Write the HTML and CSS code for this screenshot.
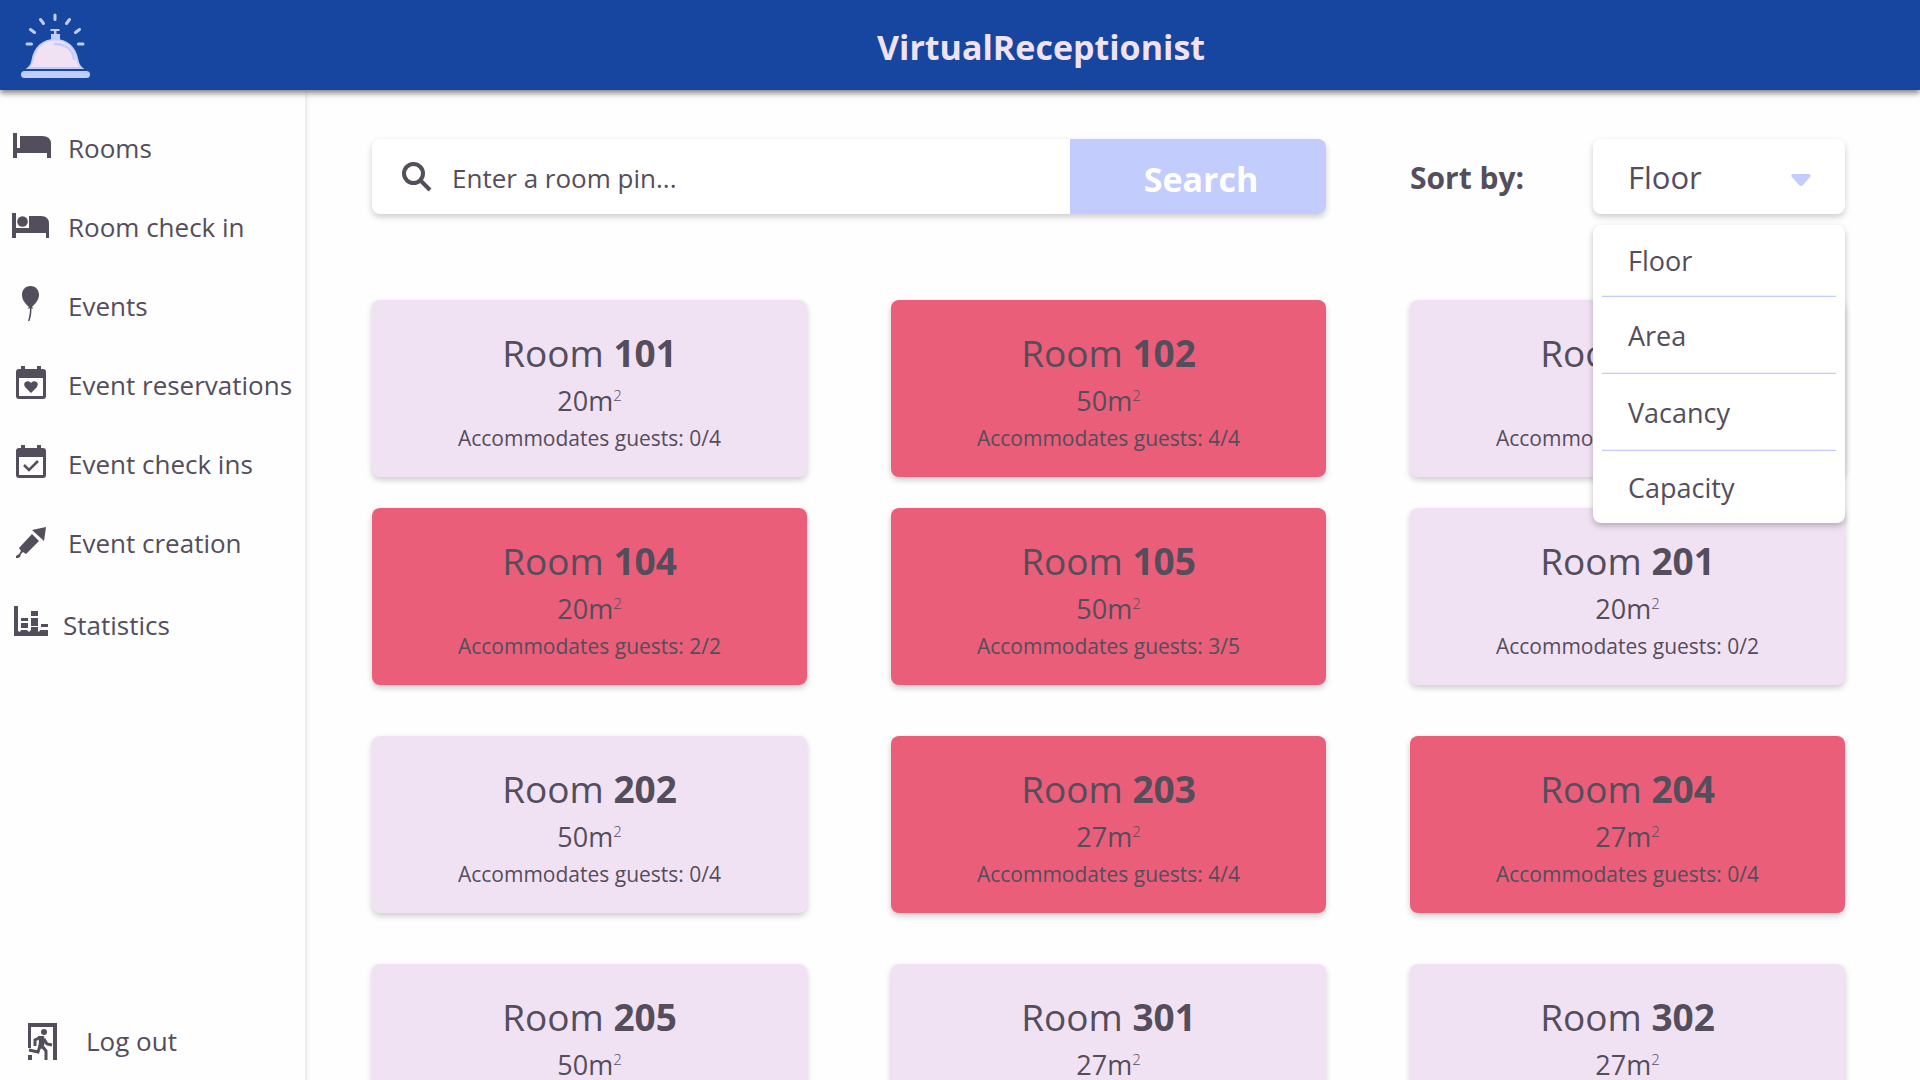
FILE: index.html
```html
<!DOCTYPE html>
<html lang="en">
<head>
<meta charset="utf-8">
<title>VirtualReceptionist</title>
<link rel="stylesheet" href="styles.css">
</head>
<body>
<header class="topbar">
  <svg class="logo" viewBox="0 0 70 66" aria-hidden="true">
    <g stroke="#c2cdfe" stroke-width="3" stroke-linecap="round">
      <path d="M35 3v4.500M20.500 7.500l3 4M49.500 7.500l-3 4M10.500 17.500l4 3M59.500 17.500l-4 3M7 32h4.500M58.500 32h4.500"/>
    </g>
    <path d="M30.500 17h9v2h-3v3H40v7h-9v-7h3v-3h-3.500z" fill="#c2cdfe"/>
    <path d="M5.500 57c3-2 5-4 6-9C14 34 23 27 35 27s21 7 23.500 21c1 5 3 7 6 9z" fill="#c2cdfe"/>
    <path d="M10 55c2-2 3-4 3.500-7C16 35.500 24 28.500 35 28.500S54 35.500 56.500 48c.5 3 1.500 5 3.500 7z" fill="#f1e2f3"/>
    <path d="M35 32c11 0 18 6 19 15" fill="none" stroke="#c2cdfe" stroke-width="2.500" stroke-linecap="round"/>
    <rect x="1" y="59" width="69" height="7" rx="3.500" fill="#c2cdfe"/>
  </svg>
  <h1 class="brand">VirtualReceptionist</h1>
</header>
<div class="layout">
  <nav class="sidebar">
    <ul class="menu">
      <li><a href="#rooms"><svg class="icon" viewBox="0 0 40 40" aria-hidden="true"><path d="M1 5h4v15h3V8h22q9 0 9 8v14h-4v-5H5v5H1z"/></svg>Rooms</a></li>
      <li><a href="#checkin"><svg class="icon" viewBox="0 0 40 40" aria-hidden="true"><path d="M0 6h4v15h13V9h12q8 0 8 8v14h-3v-5H4v5H0z"/><circle cx="10.500" cy="14.500" r="5.300"/></svg>Room check in</a></li>
      <li><a href="#events"><svg class="icon" viewBox="0 0 40 40" aria-hidden="true"><path d="M18.500 0C13 0 10 4 10 9c0 6 5 10 7 12l-1.500 1.500h2.500c0 5-1 9-2 12.500h1.500c1.500-4 2-8 2-12.500h2L20 21c3-3 7-7 7-12 0-5-3-9-8.500-9z"/></svg>Events</a></li>
      <li><a href="#reservations"><svg class="icon" viewBox="0 0 40 40" aria-hidden="true"><path fill-rule="evenodd" d="M9 1h4v3h12V1h4v3h2q3 0 3 3v24q0 3-3 3H7q-3 0-3-3V7q0-3 3-3h2zM7 13v18h24V13z"/><path d="M19 28l-5.500-5.500c-4-5 2.500-8.500 5.500-4.500 3-4 9.500-.5 5.500 4.500z"/></svg>Event reservations</a></li>
      <li><a href="#checkins"><svg class="icon" viewBox="0 0 40 40" aria-hidden="true"><path fill-rule="evenodd" d="M9 1h4v3h12V1h4v3h2q3 0 3 3v24q0 3-3 3H7q-3 0-3-3V7q0-3 3-3h2zM7 13v18h24V13z"/><path d="M12 21l5 5 9-9" fill="none" stroke="#544d5b" stroke-width="2.500"/></svg>Event check ins</a></li>
      <li><a href="#creation"><svg class="icon" viewBox="0 0 40 40" aria-hidden="true"><path d="M20 7l14-3-2 14zM20 11l7 7-13 13-3-2-2 2-1 3-2 1H4v-2l3-2 2-3-2-3z"/></svg>Event creation</a></li>
      <li><a class="stats" href="#statistics"><svg class="icon" viewBox="0 0 40 40" aria-hidden="true"><path d="M2 1h4v25l2 1 1-2h6l2 2 2-2h6l2 2 1-2h8v6H2zM9 13h7v3H9zM9 18h7v5H9zM19 6h7v5h-7zM19 13h7v8h-7zM19 22h7v5h-7zM29 19h7v3h-7z"/></svg>Statistics</a></li>
    </ul>
    <a class="logout" href="#logout"><svg class="icon" viewBox="0 0 40 40" aria-hidden="true"><path d="M4 2h29v37h-4V6H7v21H4zM4 34h4v5H4z"/><circle cx="20" cy="11" r="3"/><path d="M15 17l-4 2v6M16 25l-2 6-9-2M19 26l3 4v9M20 18l3 5 5 1" fill="none" stroke="#544d5b" stroke-width="3"/><path d="M14 15h6l1 6-2 7-5-1 1-6z"/></svg>Log out</a>
  </nav>
  <main class="content">
    <div class="tools">
      <form class="search">
        <svg class="glass" viewBox="0 0 30 30" aria-hidden="true"><circle cx="11.500" cy="11.500" r="9.500"/><path d="M18 18l10 10"/></svg>
        <input class="pin" type="text" aria-label="Room pin" placeholder="Enter a room pin...">
        <button class="go" type="button">Search</button>
      </form>
      <div class="sort">
        <span class="sort-label" id="sort-label">Sort by:</span>
        <div class="dropdown">
          <button class="current" type="button" aria-labelledby="sort-label" aria-expanded="true">Floor<svg class="caret" viewBox="0 0 20 12" aria-hidden="true"><path d="M2 0h16q3 1 1 3l-7 8q-2 2-4 0L1 3q-2-2 1-3z"/></svg></button>
          <ul class="options">
            <li><button type="button">Floor</button></li>
            <li><button type="button">Area</button></li>
            <li><button type="button">Vacancy</button></li>
            <li><button type="button">Capacity</button></li>
          </ul>
        </div>
      </div>
    </div>
    <div class="floors">
      <section class="rooms paired">
        <article class="card"><h2>Room <b>101</b></h2><p class="area">20m<sup>2</sup></p><p class="guests">Accommodates guests: 0/4</p></article>
        <article class="card taken"><h2>Room <b>102</b></h2><p class="area">50m<sup>2</sup></p><p class="guests">Accommodates guests: 4/4</p></article>
        <article class="card"><h2>Room <b>103</b></h2><p class="area">20m<sup>2</sup></p><p class="guests">Accommodates guests: 0/4</p></article>
        <article class="card taken"><h2>Room <b>104</b></h2><p class="area">20m<sup>2</sup></p><p class="guests">Accommodates guests: 2/2</p></article>
        <article class="card taken"><h2>Room <b>105</b></h2><p class="area">50m<sup>2</sup></p><p class="guests">Accommodates guests: 3/5</p></article>
        <article class="card"><h2>Room <b>201</b></h2><p class="area">20m<sup>2</sup></p><p class="guests">Accommodates guests: 0/2</p></article>
      </section>
      <section class="rooms">
        <article class="card"><h2>Room <b>202</b></h2><p class="area">50m<sup>2</sup></p><p class="guests">Accommodates guests: 0/4</p></article>
        <article class="card taken"><h2>Room <b>203</b></h2><p class="area">27m<sup>2</sup></p><p class="guests">Accommodates guests: 4/4</p></article>
        <article class="card taken"><h2>Room <b>204</b></h2><p class="area">27m<sup>2</sup></p><p class="guests">Accommodates guests: 0/4</p></article>
        <article class="card"><h2>Room <b>205</b></h2><p class="area">50m<sup>2</sup></p><p class="guests">Accommodates guests: 0/4</p></article>
        <article class="card"><h2>Room <b>301</b></h2><p class="area">27m<sup>2</sup></p><p class="guests">Accommodates guests: 0/4</p></article>
        <article class="card"><h2>Room <b>302</b></h2><p class="area">27m<sup>2</sup></p><p class="guests">Accommodates guests: 0/4</p></article>
      </section>
    </div>
  </main>
</div>
</body>
</html>
```
FILE: styles.css
```css
* { box-sizing: border-box; }
body {
  margin: 0;
  height: 100vh;
  display: flex;
  flex-direction: column;
  overflow: hidden;
  background: #fefefe;
  color: #544d5b;
  font-family: "Segoe UI", "Open Sans", "Noto Sans", sans-serif;
  font-size: 26px;
}
ul, h1, h2, p { margin: 0; padding: 0; }
ul { list-style: none; }
button, input { font: inherit; color: inherit; border: 0; background: none; }
a { color: inherit; text-decoration: none; }

.topbar {
  flex: none;
  display: flex;
  align-items: center;
  height: 90px;
  padding: 0 20px;
  background: #16469f;
  box-shadow: 0 3px 6px rgba(0, 0, 0, .5);
  z-index: 2;
}
.logo { width: 70px; height: 66px; }
.brand {
  flex: 1;
  padding: 4px 0 0 92px;
  text-align: center;
  font-size: 34px;
  line-height: 48px;
  color: #f1e2f3;
}

.layout { flex: 1; min-height: 0; display: flex; }
.sidebar {
  flex: none;
  width: 305px;
  display: flex;
  flex-direction: column;
  justify-content: space-between;
  padding: 18px 0 10px 12px;
  box-shadow: 0 3px 6px rgba(0, 0, 0, .16);
}
.menu a, .logout {
  display: flex;
  align-items: center;
  gap: 16px;
  height: 79px;
  white-space: nowrap;
}
.menu .stats { gap: 11px; height: 86px; }
.logout { height: 58px; padding-left: 12px; gap: 22px; }
.icon { width: 40px; height: 40px; fill: #544d5b; flex: none; }

.content { flex: 1; min-width: 0; padding: 49px 75px 0 67px; }
.tools, .rooms {
  display: grid;
  grid-template-columns: repeat(3, 1fr);
  column-gap: 84px;
}
.search {
  grid-column: span 2;
  display: flex;
  align-items: center;
  height: 75px;
  padding-left: 30px;
  border-radius: 8px;
  overflow: hidden;
  background: #fff;
  box-shadow: 0 3px 6px rgba(0, 0, 0, .2);
}
.glass { width: 30px; height: 30px; fill: none; stroke: #544d5b; stroke-width: 4; }
.pin { flex: 1; min-width: 0; padding: 2px 20px 0; outline: 0; }
.pin::placeholder { color: #544d5b; opacity: 1; }
.go {
  width: 256px;
  height: 75px;
  padding: 4px 0 0 6px;
  background: #c2cdfe;
  color: #fff;
  font-size: 34px;
  font-weight: 700;
}
.sort { display: flex; justify-content: space-between; align-items: center; }
.sort-label { padding-top: 2px; font-size: 30px; font-weight: 700; }
.dropdown { position: relative; width: 252px; }
.current {
  display: flex;
  align-items: center;
  justify-content: space-between;
  width: 100%;
  height: 75px;
  padding: 0 34px 0 35px;
  border-radius: 8px;
  background: #fff;
  box-shadow: 0 3px 6px rgba(0, 0, 0, .2);
  font-size: 31px;
}
.caret { width: 20px; height: 12px; margin-top: 6px; fill: #c2cdfe; }
.options {
  position: absolute;
  top: 86px;
  left: 0;
  width: 100%;
  padding: 0 9px;
  border-radius: 8px;
  background: #fff;
  box-shadow: 0 3px 6px rgba(0, 0, 0, .25);
  font-size: 27px;
  z-index: 1;
}
.options li { height: 77px; }
.options li:first-child { height: 71px; }
.options li:last-child { height: 73px; }
.options li + li { border-top: 1px solid #c2cdfe; box-shadow: 0 -1px 0 #eef1ff; }
.options button { width: 100%; height: 100%; padding: 0 26px; text-align: left; }

.floors { display: flex; flex-direction: column; gap: 51px; margin-top: 86px; }
.rooms { row-gap: 51px; }
.paired { row-gap: 31px; }
.card {
  height: 177px;
  padding-top: 29px;
  border-radius: 8px;
  background: #f1e2f3;
  box-shadow: 0 3px 6px rgba(0, 0, 0, .2);
  text-align: center;
}
.taken { background: #eb5e79; }
.card h2 { font-size: 37px; line-height: 48px; font-weight: 400; }
.area { font-size: 27px; line-height: 48px; }
.area sup { font-size: 15px; font-weight: 300; line-height: 0; }
.guests { font-size: 21px; line-height: 26px; }
```
